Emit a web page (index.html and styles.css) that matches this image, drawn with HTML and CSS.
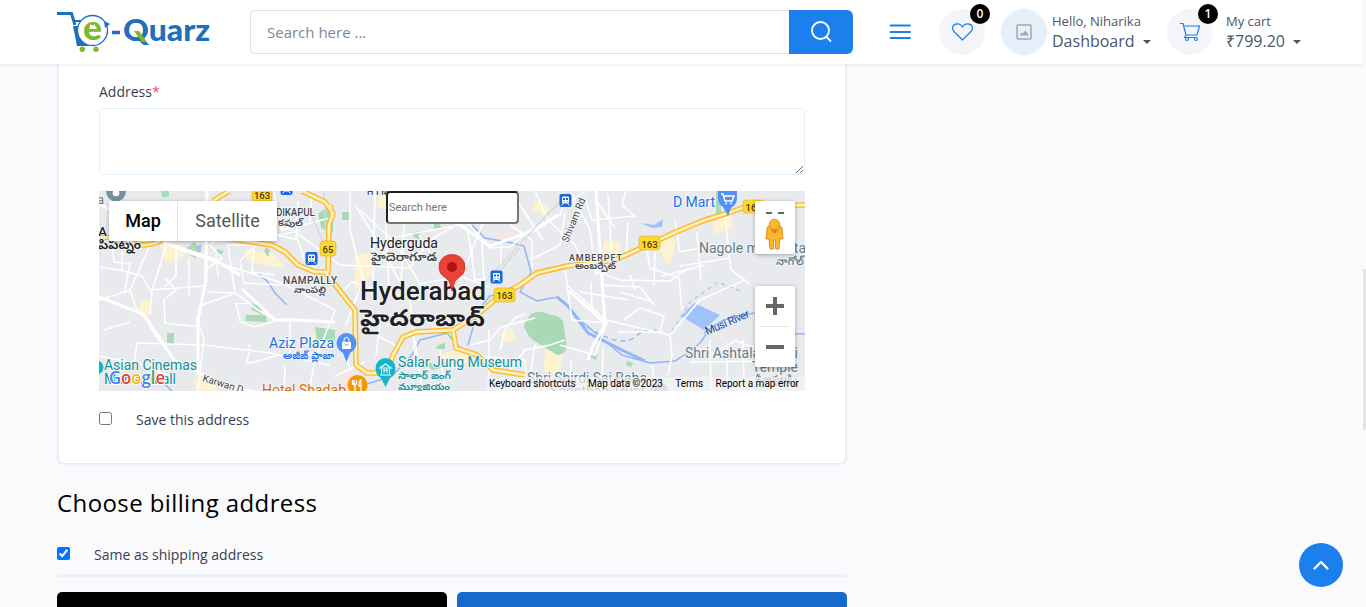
FILE: index.html
```html
<!DOCTYPE html>
<html lang="en">
<head>
<meta charset="utf-8">
<title>e-Quarz checkout</title>
<link rel="stylesheet" href="styles.css">
</head>
<body>
<header class="topbar">
  <svg class="logo" viewBox="57 8 156 46" role="img" aria-label="e-Quarz">
    <path d="M57 13.5H71.500L75 25" fill="none" stroke="#1f6fba" stroke-width="3"/>
    <path d="M73 26L77 46H90Q79 42 78 32Q77 29 79 26Z" fill="#1f6fba"/>
    <path d="M73 21H81" stroke="#1f6fba" stroke-width="2"/>
    <circle cx="92.500" cy="30.500" r="15" fill="#fff" stroke="#1f6fba" stroke-width="1.300"/>
    <path d="M104 21L110 24L105 28Z" fill="#1f6fba"/>
    <text class="logo-e" x="83" y="39.500" textLength="19" lengthAdjust="spacingAndGlyphs">e</text>
    <path d="M90 24l2.500 2 2.500-2v3h-5z" fill="#fff"/>
    <circle cx="82.300" cy="49.300" r="2.700" fill="#7fb92e"/><circle cx="96" cy="49.300" r="2.700" fill="#7fb92e"/>
    <path d="M112 32.500H120" stroke="#1f6fba" stroke-width="3.500"/>
    <text class="logo-name" x="123" y="40.500" textLength="87" lengthAdjust="spacingAndGlyphs">Quarz</text>
    <path d="M134 31H139L147 42H142Z" fill="#7fb92e"/>
  </svg>
  <form class="search">
    <input class="search-input" type="text" placeholder="Search here ...">
    <button class="search-button" type="button" aria-label="Search"><svg width="24" height="24" viewBox="0 0 24 24"><circle cx="11.500" cy="10.500" r="8.500"/><path d="M17.500 17L21.500 21"/></svg></button>
  </form>
  <svg class="menu" width="22" height="18" viewBox="0 0 22 18"><path d="M1.500 2.500H21M1.500 9H21M1.500 15H21"/></svg>
  <div class="round heart">
    <svg width="22" height="20" viewBox="0 0 22 20"><path d="M11.500 18L3 9.500C0 6 2 2 6 1.800C8.500 1.700 10.500 3 11.500 5C12.500 3 14.500 1.700 17 1.800C21 2 23 6 20 9.500Z"/></svg>
    <span class="badge">0</span>
  </div>
  <div class="round avatar"><svg width="16" height="16" viewBox="0 0 16 16"><rect x="1" y="1" width="14" height="14" rx="1"/><path d="M3.500 11.500L6 8.500L7 9.500L9.500 6.500L13 11.500Z" class="hill"/></svg></div>
  <div class="info user"><span class="small">Hello, Niharika</span><span class="big">Dashboard<i class="caret"></i></span></div>
  <div class="round cart">
    <svg width="22" height="20" viewBox="0 0 22 20"><path d="M1 1.500H4L7 13H18L20.500 4H5M7 13L5.500 15.500H18"/><circle cx="8" cy="17" r="1.500"/><circle cx="17" cy="17" r="1.500"/></svg>
    <span class="badge">1</span>
  </div>
  <div class="info"><span class="small">My cart</span><span class="big">₹799.20<i class="caret"></i></span></div>
</header>

<main class="content">
  <section class="card">
    <label class="label" for="address">Address<span class="required">*</span></label>
    <textarea class="address" id="address"></textarea>
    <div class="map">
      <svg class="map-art" viewBox="99 191 706 200">
        <rect x="99" y="191" width="706" height="200" fill="#e8eaed"/>
        <g fill="#fef3cf">
          <path d="M160 244h20l4 12-18 8zM245 250l30 4 12 14-18-2-22-6zM142 300h9v10l-3 5h-6l-4-4zM355 255l18-3-2 24-16 14zM645 243l22-10 9 8-6 24-6-4-2-8-12-2zM712 222l18-8 4 14-20 6zM605 240l15 2v12h-18zM194 378l18-4 5 17h-21zM380 195l14 5-4 10-14-4zM535 200l16 8-8 8-10-6zM500 335l12-7 4 10-9 5zM440 355l22-8 8 14-17 8zM310 333l15 8-8 16zM545 350l18 3-4 23-15-5z"/>
        </g>
        <g fill="#fbe4e4"><path d="M497 233l16-3 6 5-3 4-18 1zM340 373l14-4 6 20h-18z"/></g>
        <g fill="#a8dab5">
          <path d="M161 191h8v6h-7zM187 248l7-6 8 8-7 8-8-5zM217 249l7 2-3 4-5-2zM318 214l8-6 7 3v22l-12-5zM266 247l4 3-2 7-4-6zM251 303l10 4 2 8-11-5zM246 315h20l1 7-22-1zM167 333h7v11h-7zM342 212h7v8h-7zM412 233l8-2v8l-5-1zM434 224l6-1 1 5-7 1zM315 327l20 3v12h-18zM438 345l7-2v6h-9zM427 364l6-1 8 5-9 2zM591 353l6 2-1 5-6-3zM627 361l6 2-2 4-5-2zM716 191h5v23h-5z"/>
          <path d="M531 314Q525 321 524 326Q528 339 538 343L557 355Q565 355 567 347L563 321Q557 314 550 315Q540 309 531 314Z"/>
        </g>
        <g fill="#9fc2fa"><path d="M681 316L694 303L720 315L704 330ZM640 223l14 2 9-6-1 8-9 1zM196 247l6-3-2 8z"/></g>
        <g fill="none" stroke="#90b6f7" stroke-width="1.500">
          <path d="M258 273L268 282L275 293L287 305M472 225L485 238L508 242L524 246L531 272L520 292L537 301L557 297L568 306L580 320L600 337L622 355L650 363L675 361L690 351L701 342L706 334M755 313L735 316L720 322L704 333M765 333L805 334M367 384L392 376L412 355L420 340L447 333L462 350M510 292L490 296L478 310L468 345M145 388L158 378L172 391"/>
          <path d="M557 297L568 306L588 333L622 350L645 361" stroke-width="3"/><path d="M580 322Q620 350 635 337T660 334" stroke-dasharray="5 4"/><path d="M672 331L690 302L718 282L742 292" stroke-dasharray="4 4" stroke-width="1"/>
        </g>
        <g fill="none" stroke="#fff" stroke-width="1.600">
          <path d="M99 205L140 220L160 241L180 250L215 262L280 282L335 310M99 300L130 290L150 245M130 290L138 313L145 317L155 335L174 360L202 373L225 386L255 391M150 315L152 290L165 250L167 205M198 391L204 338L197 320L205 285L207 191M204 345L270 353L330 365M222 191L225 230L210 245L222 258L205 270M242 202L255 225L270 233L298 240L306 265M240 260L244 283L282 285M241 260L262 240L300 230M112 244L114 262L130 264L125 290M165 278L176 290L164 300L165 323L200 327M207 292L235 293L228 245L255 245L270 230M202 305L235 293L258 310L275 320L290 319L290 360M335 310L315 360L309 391M274 192L282 230L330 218M279 220L340 265L410 268L430 240L465 220L490 248L510 247L530 230L560 215L570 191M355 205L380 245L410 300L415 355M400 250L420 284L459 276L490 287M470 245L475 280L500 277M565 212L560 245L530 260M360 210L390 238L460 225L485 210L510 220M350 191L350 230L363 280L346 325M495 211L482 225L470 255L460 280M535 191L548 220L575 245L585 267L620 280L670 281L689 268M570 191L590 230L596 276M585 198L592 220L635 216L622 205L626 191M646 245L650 268L679 278L682 310M565 270L572 320L607 323L595 355L560 345M568 286L606 320L670 335L700 300L745 280M600 285L640 287L654 305M618 332L660 332L664 316L640 308L624 320M670 335L672 355L668 375M725 216L731 270L750 284M680 266L730 258M675 220L680 252L720 244M630 275L635 290M652 365L656 391M710 355L735 341L754 347M500 350L505 330L515 318L525 314M510 370L525 350L550 345L565 340M470 345L490 340L501 327L535 318M345 290L351 282L420 300M362 325L380 337L401 348M440 350L445 391M99 356L140 364L172 377M134 364L137 343L204 345M240 320L236 304L251 303M239 321L254 327L279 320M278 355L255 362L247 363L250 345"/>
          <path d="M99 267L120 270L142 276L150 290L205 286M122 252L122 272M176 248L176 276L165 286M189 258L189 296M216 254L218 276M254 248L252 272L275 275M298 202L296 239M312 191L310 221M375 191L373 280M386 225L389 292M404 223L401 284M419 235L436 262M466 225L473 258M482 240L484 283M501 245L501 267M510 225L532 240L532 268M518 202L543 240M567 205L585 191M596 200L615 228M608 195L612 259M628 222L626 258M655 252L654 285M662 276L705 265M697 232L701 281M580 292L629 300M591 283L592 310M620 292L650 301M710 340L711 391M727 343L727 391M743 340L744 391M690 362L779 361M466 355L525 360L527 391M489 330L489 390M535 344L528 390M571 360L570 391M603 348L602 390M415 340L422 390M380 325L376 356M342 340L350 370M335 376L365 362M104 330L130 322M285 366L284 391"/>
        </g>
        <g fill="none" stroke="#fff" stroke-width="3"><path d="M99 297L143 314L149 322L174 360L210 378L235 391M99 203L160 241L213 259L240 275M207 191L206 280L198 320L198 375M242 289L275 320H296L335 322M605 324L593 346L588 360M569 291L606 324M460 225L490 246L535 230L558 215M596 191L605 324"/></g>
        <g fill="none" stroke="#d4d7dc" stroke-width="1.300"><path d="M483 284L545 217L570 191M324 190L327 250L310 212M520 248L500 270"/></g>
        <g class="road-case">
          <path id="highways" d="M99 238Q120 235 138 245Q163 246 170 230L238 240L272 245L285 252L298 265L315 272L328 272L329 225L333 213L325 202L302 191M325 272L355 310L356 365L367 373H387L393 355L403 337L416 332L453 330L477 315L497 298L520 285L537 273L567 266L615 260L648 245L678 231L705 220L728 213L745 207L805 205M453 330L456 348L477 355L493 370L525 375M213 201L229 191M330 205L333 218"/>
        </g>
        <use href="#highways" class="road-fill"/>
        <g class="shield">
          <rect x="252" y="188" width="20" height="13" rx="3"/><text x="262" y="199">163</text>
          <rect x="320" y="241" width="16" height="15" rx="3"/><text x="328" y="253">65</text>
          <rect x="494" y="288" width="21" height="14" rx="3"/><text x="504.500" y="299">163</text>
          <rect x="639" y="236" width="21" height="14" rx="3"/><text x="649.500" y="248">163</text>
          <rect x="743" y="200" width="21" height="13" rx="3"/><text x="751" y="211">16</text>
        </g>
        <defs><g id="train"><rect x="-6" y="-6.500" width="12" height="13" rx="2" fill="#1a67d8"/><rect x="-3.500" y="-4" width="7" height="7" rx="1" fill="#fff"/><path d="M-2.500-2.500h2v2h-2zM.5-2.500h2v2h-2zM-2 1h1v1h-1zM1 1h1v1h-1z" fill="#1a67d8"/><path d="M-2 3L-4 5M2 3L4 5" stroke="#fff"/></g></defs>
        <use href="#train" x="311.500" y="258.500"/><use href="#train" x="496.500" y="277"/><use href="#train" x="565.500" y="200.500"/><use href="#train" x="286.500" y="188.500"/>
        <circle cx="116" cy="191.500" r="10" fill="#78909c"/><circle cx="116" cy="193" r="3.300" fill="#fff"/>
        <g class="lbl">
          <text x="97" y="204" class="slate" font-size="13">a</text>
          <text x="91" y="236" class="dark" font-size="13">PA</text>
          <text x="98" y="249" class="dark tel" font-size="13" textLength="43" lengthAdjust="spacingAndGlyphs">పిపట్నం</text>
          <text x="367" y="195" font-size="9" textLength="22">HIM</text>
          <text x="276" y="216" font-size="10" textLength="39">DIKAPUL</text><text x="278" y="226" class="tel" font-size="9" textLength="25" lengthAdjust="spacingAndGlyphs">కపుల్</text>
          <text x="283" y="284" font-size="10" textLength="54">NAMPALLY</text><text x="294" y="293" class="tel" font-size="9" textLength="32" lengthAdjust="spacingAndGlyphs">నాంపల్లి</text>
          <text x="370" y="248" class="dark light" font-size="14" textLength="68" lengthAdjust="spacingAndGlyphs">Hyderguda</text><text x="371" y="261" class="tel" font-size="12" textLength="66" lengthAdjust="spacingAndGlyphs">హైదెరాగూడ</text>
          <text x="569" y="261" font-size="9" textLength="53">AMBERPET</text><text x="575" y="269" class="tel" font-size="9" textLength="41" lengthAdjust="spacingAndGlyphs">అంబర్పేట్</text>
          <text x="568" y="243" font-size="10" class="light" textLength="47" transform="rotate(-68 568 243)">Shivam Rd</text>
          <text x="202" y="381" font-size="10" class="light" textLength="42" transform="rotate(17 202 381)">Karwan D</text>
          <text x="360" y="299.500" class="city" font-size="25.500" textLength="126" lengthAdjust="spacingAndGlyphs">Hyderabad</text>
          <text x="360" y="325.500" class="city tel-city" font-size="23" textLength="125" lengthAdjust="spacingAndGlyphs">హైదరాబాద్</text>
          <text x="673" y="207" class="blue" font-size="14" textLength="42">D Mart</text>
          <text x="269" y="348" class="blue" font-size="14" textLength="65">Aziz Plaza</text><text x="283" y="358.500" class="blue tel" font-size="10" textLength="51" lengthAdjust="spacingAndGlyphs">అజీజ్ ప్లాజా</text>
          <text x="398" y="367" class="teal" font-size="14" textLength="124">Salar Jung Museum</text><text x="398" y="378.500" class="teal tel" font-size="10" textLength="53" lengthAdjust="spacingAndGlyphs">సాలార్ జంగ్</text><text x="398" y="389.500" class="teal tel" font-size="10" textLength="52" lengthAdjust="spacingAndGlyphs">మ్యూజియం</text>
          <text x="104" y="370" class="teal" font-size="14" textLength="93">Asian Cinemas</text><text x="104" y="384" class="teal" font-size="14" textLength="72">Moosa Mall</text>
          <text x="262" y="395" class="orange" font-size="14" textLength="84">Hotel Shadab</text>
          <text x="699" y="253" class="slate" font-size="14" textLength="107">Nagole metro sta</text><text x="776" y="264.500" class="slate tel" font-size="11" textLength="28" lengthAdjust="spacingAndGlyphs">నాగోల్</text>
          <text x="685" y="358" class="slate" font-size="14" textLength="113">Shri Ashtalakshmi</text><text x="752" y="372" class="slate" font-size="14" textLength="46">Temple</text><text x="755" y="382" class="slate tel" font-size="10" textLength="42" lengthAdjust="spacingAndGlyphs">శ్రీ అష్టలక్ష్మి</text>
          <text x="527" y="383" class="slate" font-size="14" textLength="120">Shri Shirdi Sai Baba</text><text x="550" y="396" class="slate" font-size="14" textLength="95">Sansthan Trust</text>
          <text x="707" y="335" class="river" font-size="11" textLength="47" transform="rotate(-23 707 335)">Musi River</text>
        </g>
        <path d="M452 291L449 281L441 274Q438 269 439.500 263Q443 254.500 452 254.500T464.500 263Q466 269 463 274L455 281Z" fill="#ea4335" stroke="#c5221f" stroke-width=".7"/><circle cx="452" cy="267" r="5" fill="#b31412"/>
        <g><path d="M346.500 362L343 353Q336.500 349 336.500 343A10 10 0 0 1 356.500 343Q356.500 349 350 353Z" fill="#5491f5"/><path d="M342 342h9v7h-9z" fill="#fff"/><path d="M344 342v-2a2.500 2.500 0 0 1 5 0v2" fill="none" stroke="#fff"/><path d="M344.500 344q2 3 4 0" fill="none" stroke="#5491f5"/></g>
        <g><path d="M385.500 387L381 378Q375.500 375 375.500 368A10 10 0 0 1 395.500 368Q395.500 375 390 378Z" fill="#12b5cb"/><path d="M380 368l5.500-4 5.500 4z" fill="none" stroke="#fff" stroke-width="1.200"/><path d="M381.500 369v5M389.500 369v5M380 375h11M384 373v-4l1.500 2 1.500-2v4" fill="none" stroke="#fff"/></g>
        <g><path d="M728 216L723 207Q717 203 718 196V191H737V198Q737 204 731 208Z" fill="#5491f5"/><path d="M721 194h2l2 7h7l2-5h-10" stroke="#fff" stroke-width="1.500" fill="none"/><circle cx="726" cy="203.500" r="1" fill="#fff"/><circle cx="731" cy="203.500" r="1" fill="#fff"/></g>
        <circle cx="357.500" cy="385" r="10" fill="#f29900"/><path d="M354 380v4q0 2 1 2v5M352.500 380v4h4v-4M361 391v-11q-2 1-2 6h2" stroke="#fff" stroke-width="1.300" fill="none"/>
        <path d="M99 361a7 7 0 0 1 0 13z" fill="#12b5cb"/>
        <circle cx="659" cy="391" r="9" fill="#a1b0b9"/>
        <text class="google" x="109" y="384" textLength="56" lengthAdjust="spacingAndGlyphs"><tspan fill="#4285f4">G</tspan><tspan fill="#ea4335">o</tspan><tspan fill="#fbbc04">o</tspan><tspan fill="#4285f4">g</tspan><tspan fill="#34a853">l</tspan><tspan fill="#ea4335">e</tspan></text>
      </svg>
      <div class="map-types"><button class="type active" type="button">Map</button><button class="type" type="button">Satellite</button></div>
      <input class="map-search" type="text" placeholder="Search here">
      <div class="map-person"><svg width="40" height="53" viewBox="0 0 40 53"><path d="M11 12H17M23 12H29" stroke="#666" stroke-width="2"/><path d="M12 27Q13 24 19.500 24T27 27L28 38H25L24 48H20.500V39H18.500V48H15L14 38H11Z" fill="#fbb62d" stroke="#c88318" stroke-width=".8"/><circle cx="19.500" cy="23.500" r="5.300" fill="#fbb62d" stroke="#c88318" stroke-width=".8"/><path d="M15.500 28.500H23.500L19.500 33Z" fill="#e57b25"/></svg></div>
      <div class="map-zoom"><svg width="40" height="81" viewBox="0 0 40 81"><path d="M11 20H29M20 11V29M11 61H29" stroke="#666" stroke-width="4"/><path d="M5 40.500H35" stroke="#e6e6e6"/></svg></div>
      <div class="map-credit"><span class="shortcuts">Keyboard shortcuts</span><span class="data">Map data ©2023</span><span class="terms">Terms</span><span class="report">Report a map error</span></div>
    </div>
    <label class="check save"><input type="checkbox">Save this address</label>
  </section>
  <h2 class="heading">Choose billing address</h2>
  <label class="check same"><input type="checkbox" checked>Same as shipping address</label>
  <div class="actions"><div class="action dark-action"></div><div class="action blue-action"></div></div>
</main>
<button class="to-top" type="button" aria-label="Back to top"><svg width="18" height="12" viewBox="0 0 18 12"><path d="M2.500 9.500L9 3L15.500 9.500"/></svg></button>
<div class="scrollbar"><div class="thumb"></div></div>
</body>
</html>
```
FILE: styles.css
```css
* { box-sizing: border-box; }
body { margin: 0; height: 607px; overflow: hidden; background: #fafafc; font-family: "Open Sans", sans-serif; color: #373f50; font-size: 14px; }
button { border: 0; padding: 0; }
.topbar { position: relative; z-index: 2; height: 64px; width: 1363px; padding-left: 57px; background: #fff; box-shadow: 0 1px 4px rgba(0,0,0,.07); display: flex; align-items: center; }
.logo { width: 156px; height: 46px; margin: -2px 37px 0 0; flex: none; }
.logo-e { font: 900 34px Lato, sans-serif; fill: #7fb92e; }
.logo-name { font: 900 31px Lato, sans-serif; fill: #1f6fba; }
.search { display: flex; width: 603px; height: 44px; flex: none; }
.search-input { flex: 1; border: 1px solid #dae1e7; border-right: 0; border-radius: 5px 0 0 5px; padding: 0 16px; font: 15px "Open Sans", sans-serif; background: #fff; }
.search-input::placeholder { color: #7d879c; }
.search-button { width: 64px; background: #1b7fed; border-radius: 0 6px 6px 0; display: flex; align-items: center; justify-content: center; }
.search-button svg { fill: none; stroke: #fff; stroke-width: 1.8; stroke-linecap: round; }
.menu { margin: 0 28px 0 36px; fill: none; stroke: #1b7fed; stroke-width: 1.8; stroke-linecap: round; flex: none; }
.round { width: 46px; height: 46px; border-radius: 50%; background: #f3f5f9; display: flex; align-items: center; justify-content: center; position: relative; flex: none; }
.round svg { fill: none; stroke: #1b7fed; stroke-width: 1.2; }
.heart { margin-right: 16px; }
.avatar { background: #e7eff8; }
.avatar svg { stroke: #9aa9bb; stroke-width: 1.5; }
.avatar .hill { fill: #9aa9bb; stroke: none; }
.badge { position: absolute; left: 31px; top: -5px; width: 20px; height: 20px; border-radius: 50%; background: #000; color: #fff; font: 600 12px/20px "Open Sans", sans-serif; text-align: center; }
.info { display: flex; flex-direction: column; margin: 0 0 0 5px; color: #4b566b; white-space: nowrap; }
.user { width: 115px; }
.small { font-size: 13px; line-height: 19px; }
.big { font-size: 16px; line-height: 21px; display: flex; align-items: center; }
.caret { border: 4.5px solid transparent; border-top-color: #4b566b; border-bottom: 0; margin: 0 0 0 8px; }
.info + .cart + .info { margin-left: 13px; }
.content { width: 790px; margin-left: 57px; }
.card { height: 401px; margin: -1px 1px 0 1px; padding: 19px 41px 0 40px; background: #fff; border: 1px solid #e3edf7; border-top: 0; border-radius: 0 0 6px 6px; box-shadow: 0 0 3px #cfe2f8; }
.label { display: block; line-height: 20px; height: 26px; }
.required { color: #f34770; }
.address { display: block; width: 706px; height: 67px; border: 1px solid #e3f3ff; border-radius: 4px; background: #fff; resize: vertical; margin: 0 0 16px; }
.map { position: relative; width: 706px; height: 200px; overflow: hidden; font-family: Roboto, sans-serif; }
.map-art { display: block; width: 706px; height: 200px; }
.road-case { fill: none; stroke: #fbb82e; stroke-width: 5.5; stroke-linejoin: round; }
.road-fill { fill: none; stroke: #fff0b5; stroke-width: 2.8; stroke-linejoin: round; }
.shield { fill: #fdd835; stroke: #d5a900; stroke-width: .5; font: 500 9.5px Roboto, sans-serif; }
.shield text { fill: #493b08; stroke: none; text-anchor: middle; }
.lbl { font-family: Roboto, "Noto Sans Telugu", "Noto Sans", sans-serif; font-weight: 500; fill: #44474c; stroke: #f5f6f7; stroke-width: 2px; paint-order: stroke; stroke-linejoin: round; }
.light, .blue, .teal, .slate, .orange, .river { font-weight: 400; }
.tel { font-weight: 600; }
.dark { fill: #202124; }
.city { fill: #202124; font-weight: 500; }
.tel-city { font-weight: 700; }
.blue { fill: #1a70e8; }
.teal { fill: #129099; }
.slate { fill: #607d8b; }
.orange { fill: #d56e0c; }
.river { fill: #174ea6; stroke: none; }
.google { font: 600 18px "Open Sans", sans-serif; stroke: #fff; stroke-width: 2px; paint-order: stroke; }
.map-types { position: absolute; left: 10px; top: 10px; height: 40px; width: 168px; display: flex; box-shadow: 0 1px 4px rgba(0,0,0,.3); }
.type { width: 68px; padding-bottom: 2px; background: #fff; font: 18px Roboto, sans-serif; color: #565656; }
.type + .type { width: 100px; border-left: 1px solid #e4e4e4; }
.active { font-weight: 500; color: #000; }
.map-search { position: absolute; left: 287px; top: 0; width: 133px; height: 33px; border: 2px inset #767676; border-radius: 4px; padding: 0 2px 0 1px; font: 11px Roboto, sans-serif; background: #fff; }
.map-search::placeholder { color: #757575; }
.map-person, .map-zoom { position: absolute; left: 656px; top: 10px; width: 40px; height: 53px; background: #fff; border-radius: 2px; box-shadow: 0 1px 4px rgba(0,0,0,.3); }
.map-zoom { top: 95px; height: 81px; }
.map-credit { position: absolute; right: 0; bottom: 0; height: 14px; width: 318px; padding: 0 6px 0 2px; background: rgba(245,245,245,.7); display: flex; justify-content: space-between; font: 10px/14px Roboto, sans-serif; color: #000; white-space: nowrap; }
.check { display: flex; align-items: center; height: 20px; margin-top: 19px; }
.check input { width: 13px; height: 13px; margin: -3px 24px 0 0; }
.save { margin-top: 18px; }
.save input { margin-top: -1px; }
.heading { margin: 21px 0 0; font-size: 24px; line-height: 36px; font-weight: 400; letter-spacing: .4px; color: #000; }
.same { height: 33px; margin-top: 23px; padding-bottom: 9px; border-bottom: 3px solid #e8f2fc; }
.actions { display: flex; gap: 10px; margin-top: 15px; }
.action { flex: 1; height: 44px; border-radius: 5px; background: #000; }
.blue-action { background: #176acb; }
.to-top { position: absolute; left: 1299px; top: 543px; width: 44px; height: 44px; border-radius: 50%; background: #1b7fed; display: flex; align-items: center; justify-content: center; }
.to-top svg { fill: none; stroke: #fff; stroke-width: 2.3; stroke-linecap: round; stroke-linejoin: round; }
.scrollbar { position: absolute; right: 0; top: 0; width: 3px; height: 607px; background: #fcfcfd; padding-top: 269px; }
.thumb { height: 161px; background: #e5e5e6; border-radius: 1px; }
```
